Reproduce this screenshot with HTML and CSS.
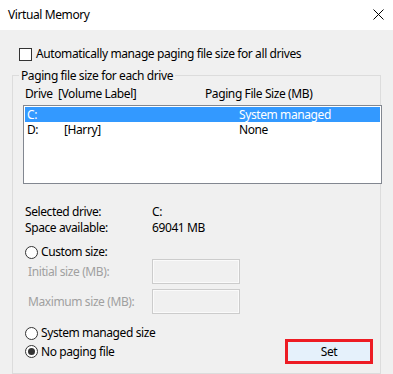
FILE: index.html
```html
<!DOCTYPE html>
<html lang="en">
<head>
    <meta charset="UTF-8">
    <meta name="viewport" content="width=device-width, initial-scale=1.0">
    <title>Virtual Memory</title>
    <link rel="stylesheet" href="styles.css">
</head>
<body>
    <div class="dialog">
        <header class="titlebar">
            <span class="title">Virtual Memory</span>
            <button class="close-button" aria-label="Close">
                <svg width="11" height="11" viewBox="0 0 11 11" fill="none" stroke="#000" stroke-width="1">
                    <path d="M0.5 0.5L10.5 10.5M10.5 0.5L0.5 10.5"/>
                </svg>
            </button>
        </header>

        <div class="dialog-body">
            <label class="auto-row">
                <span class="checkbox"></span>
                <span>Automatically manage paging file size for all drives</span>
            </label>

            <fieldset class="group">
                <legend class="group-label">Paging file size for each drive</legend>

                <div class="list-header">
                    <span>Drive</span>
                    <span>[Volume Label]</span>
                    <span>Paging File Size (MB)</span>
                </div>

                <div class="drive-list">
                    <div class="drive-row selected">
                        <span>C:</span>
                        <span></span>
                        <span>System managed</span>
                    </div>
                    <div class="drive-row">
                        <span>D:</span>
                        <span>[Harry]</span>
                        <span>None</span>
                    </div>
                </div>

                <div class="drive-info">
                    <span>Selected drive:</span>
                    <span>C:</span>
                    <span>Space available:</span>
                    <span>69041 MB</span>
                </div>

                <label class="radio-row custom-row">
                    <span class="radio"></span>
                    <span>Custom size:</span>
                </label>

                <div class="size-row">
                    <span class="size-label">Initial size (MB):</span>
                    <span class="size-input"></span>
                </div>
                <div class="size-row size-row-max">
                    <span class="size-label">Maximum size (MB):</span>
                    <span class="size-input"></span>
                </div>

                <label class="radio-row system-row">
                    <span class="radio"></span>
                    <span>System managed size</span>
                </label>

                <div class="bottom-row">
                    <label class="radio-row">
                        <span class="radio checked"></span>
                        <span>No paging file</span>
                    </label>
                    <button class="set-button">Set</button>
                </div>
            </fieldset>
        </div>
    </div>
</body>
</html>
```

FILE: styles.css
```css
* {
    margin: 0;
    padding: 0;
    box-sizing: border-box;
}

body {
    font-family: 'Noto Sans', 'Liberation Sans', sans-serif;
    font-size: 12px;
    line-height: 16px;
    letter-spacing: -0.4px;
    color: #000;
    background-color: #f0f0f0;
}

.dialog {
    width: 393px;
    height: 374px;
    background-color: #f0f0f0;
    overflow: hidden;
}

.titlebar {
    height: 30px;
    background-color: white;
    display: flex;
    justify-content: space-between;
    align-items: center;
    padding-left: 8px;
    padding-right: 9px;
}

.title {
    font-size: 12px;
}

.close-button {
    display: flex;
    width: 11px;
    height: 11px;
    border: none;
    background: none;
    margin-top: -1px;
}

.dialog-body {
    padding-top: 16px;
}

.auto-row {
    display: flex;
    align-items: center;
    gap: 4px;
    height: 16px;
    padding-left: 19px;
}

.checkbox {
    width: 13px;
    height: 13px;
    border: 1px solid #333;
    background-color: white;
}

.group {
    margin: 6px 12px 0;
    height: 306px;
    border: 1px solid #dcdcdc;
    padding: 0 0 8px;
}

.group-label {
    margin-left: 6px;
    padding: 0 2px;
    line-height: 15px;
}

.list-header {
    display: grid;
    grid-template-columns: 33px 147px auto;
    margin: 3px 0 0 12px;
}

.drive-list {
    margin: 3px -2px 0 10px;
    height: 79px;
    border: 1px solid #828790;
    background-color: white;
    padding: 1px;
}

.drive-row {
    display: grid;
    grid-template-columns: 37px 175px auto;
    height: 15px;
    line-height: 15px;
    padding-left: 2px;
    overflow: hidden;
}

.drive-row.selected {
    background-color: #3399ff;
    color: white;
}

.drive-info {
    display: grid;
    grid-template-columns: 127px auto;
    margin: 20px 0 0 12px;
}

.radio-row {
    display: flex;
    align-items: center;
    gap: 3px;
    padding-left: 12px;
    height: 14px;
}

.custom-row {
    margin-top: 9px;
}

.radio {
    width: 13px;
    height: 13px;
    border: 1px solid #333;
    border-radius: 50%;
    background-color: white;
    display: flex;
    align-items: center;
    justify-content: center;
}

.radio.checked::after {
    content: '';
    width: 7px;
    height: 7px;
    border-radius: 50%;
    background-color: #333;
}

.size-row {
    display: grid;
    grid-template-columns: 124px 88px;
    align-items: center;
    padding-left: 15px;
    color: #a0a0a0;
}

.size-row-max {
    margin-top: 5px;
}

.size-input {
    height: 25px;
    border: 1px solid #cccccc;
    box-shadow: inset 0 0 0 1px #fafafa;
}

.system-row {
    margin-top: 12px;
}

.bottom-row {
    display: flex;
    justify-content: space-between;
    align-items: center;
    padding-right: 7px;
    margin-top: -1px;
}

.bottom-row .radio-row {
    height: 25px;
}

.set-button {
    width: 88px;
    height: 25px;
    border: 3px solid #ed1c24;
    background-color: #e5f1fb;
    font-family: inherit;
    font-size: 12px;
    letter-spacing: inherit;
    color: #000;
}
```
